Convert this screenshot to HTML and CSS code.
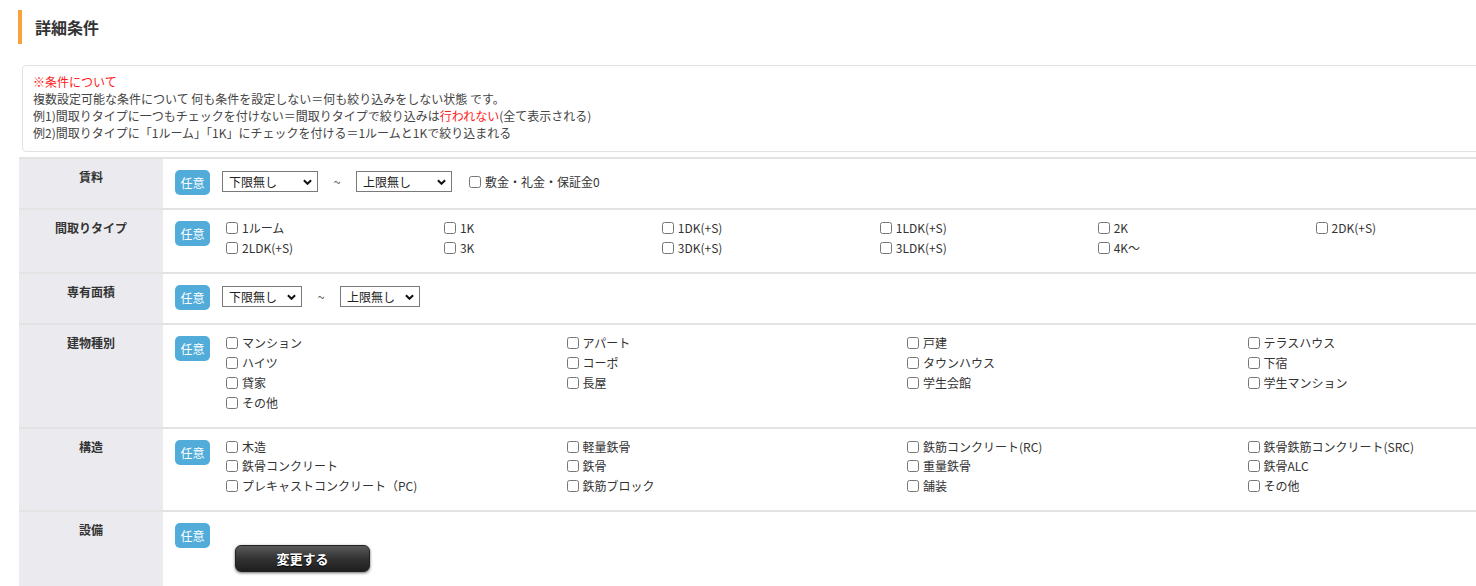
FILE: index.html
```html
<!DOCTYPE html>
<html lang="ja">
<head>
  <meta charset="UTF-8">
  <meta name="viewport" content="width=device-width, initial-scale=1.0">
  <title>詳細条件</title>
  <link rel="stylesheet" href="styles.css">
</head>
<body>
  <div class="wrap">
    <h2 class="ttl">詳細条件</h2>

    <!-- 条件についての説明 -->
    <div class="notice">
      <p class="notice-red">※条件について</p>
      <p>複数設定可能な条件について 何も条件を設定しない＝何も絞り込みをしない状態 です。</p>
      <p>例1)間取りタイプに一つもチェックを付けない＝間取りタイプで絞り込みは<span class="red">行われない</span>(全て表示される)</p>
      <p>例2)間取りタイプに「1ルーム」「1K」にチェックを付ける＝1ルームと1Kで絞り込まれる</p>
    </div>

    <form class="cond-table">
      <!-- 賃料 -->
      <div class="cond-row">
        <div class="cond-th">賃料</div>
        <div class="cond-td">
          <span class="badge">任意</span>
          <div class="range">
            <div class="sel sel-wide">
              <select><option>下限無し</option></select>
              <svg class="chev" viewBox="0 0 10 6"><path d="M1 1 L5 5 L9 1" /></svg>
            </div>
            <span class="tilde">~</span>
            <div class="sel sel-wide">
              <select><option>上限無し</option></select>
              <svg class="chev" viewBox="0 0 10 6"><path d="M1 1 L5 5 L9 1" /></svg>
            </div>
            <label class="chk chk-inline"><input type="checkbox">敷金・礼金・保証金0</label>
          </div>
        </div>
      </div>

      <!-- 間取りタイプ -->
      <div class="cond-row">
        <div class="cond-th">間取りタイプ</div>
        <div class="cond-td">
          <span class="badge">任意</span>
          <ul class="chk-list six">
            <li><label class="chk"><input type="checkbox">1ルーム</label></li>
            <li><label class="chk"><input type="checkbox">1K</label></li>
            <li><label class="chk"><input type="checkbox">1DK(+S)</label></li>
            <li><label class="chk"><input type="checkbox">1LDK(+S)</label></li>
            <li><label class="chk"><input type="checkbox">2K</label></li>
            <li><label class="chk"><input type="checkbox">2DK(+S)</label></li>
            <li><label class="chk"><input type="checkbox">2LDK(+S)</label></li>
            <li><label class="chk"><input type="checkbox">3K</label></li>
            <li><label class="chk"><input type="checkbox">3DK(+S)</label></li>
            <li><label class="chk"><input type="checkbox">3LDK(+S)</label></li>
            <li><label class="chk"><input type="checkbox">4K～</label></li>
          </ul>
        </div>
      </div>

      <!-- 専有面積 -->
      <div class="cond-row">
        <div class="cond-th">専有面積</div>
        <div class="cond-td">
          <span class="badge">任意</span>
          <div class="range">
            <div class="sel">
              <select><option>下限無し</option></select>
              <svg class="chev" viewBox="0 0 10 6"><path d="M1 1 L5 5 L9 1" /></svg>
            </div>
            <span class="tilde">~</span>
            <div class="sel">
              <select><option>上限無し</option></select>
              <svg class="chev" viewBox="0 0 10 6"><path d="M1 1 L5 5 L9 1" /></svg>
            </div>
          </div>
        </div>
      </div>

      <!-- 建物種別 -->
      <div class="cond-row">
        <div class="cond-th">建物種別</div>
        <div class="cond-td">
          <span class="badge">任意</span>
          <ul class="chk-list four">
            <li><label class="chk"><input type="checkbox">マンション</label></li>
            <li><label class="chk"><input type="checkbox">アパート</label></li>
            <li><label class="chk"><input type="checkbox">戸建</label></li>
            <li><label class="chk"><input type="checkbox">テラスハウス</label></li>
            <li><label class="chk"><input type="checkbox">ハイツ</label></li>
            <li><label class="chk"><input type="checkbox">コーポ</label></li>
            <li><label class="chk"><input type="checkbox">タウンハウス</label></li>
            <li><label class="chk"><input type="checkbox">下宿</label></li>
            <li><label class="chk"><input type="checkbox">貸家</label></li>
            <li><label class="chk"><input type="checkbox">長屋</label></li>
            <li><label class="chk"><input type="checkbox">学生会館</label></li>
            <li><label class="chk"><input type="checkbox">学生マンション</label></li>
            <li><label class="chk"><input type="checkbox">その他</label></li>
          </ul>
        </div>
      </div>

      <!-- 構造 -->
      <div class="cond-row">
        <div class="cond-th">構造</div>
        <div class="cond-td">
          <span class="badge">任意</span>
          <ul class="chk-list four tight">
            <li><label class="chk"><input type="checkbox">木造</label></li>
            <li><label class="chk"><input type="checkbox">軽量鉄骨</label></li>
            <li><label class="chk"><input type="checkbox">鉄筋コンクリート(RC)</label></li>
            <li><label class="chk"><input type="checkbox">鉄骨鉄筋コンクリート(SRC)</label></li>
            <li><label class="chk"><input type="checkbox">鉄骨コンクリート</label></li>
            <li><label class="chk"><input type="checkbox">鉄骨</label></li>
            <li><label class="chk"><input type="checkbox">重量鉄骨</label></li>
            <li><label class="chk"><input type="checkbox">鉄骨ALC</label></li>
            <li><label class="chk"><input type="checkbox">プレキャストコンクリート（PC)</label></li>
            <li><label class="chk"><input type="checkbox">鉄筋ブロック</label></li>
            <li><label class="chk"><input type="checkbox">舗装</label></li>
            <li><label class="chk"><input type="checkbox">その他</label></li>
          </ul>
        </div>
      </div>

      <!-- 設備 -->
      <div class="cond-row">
        <div class="cond-th">設備</div>
        <div class="cond-td cond-td-col">
          <span class="badge">任意</span>
          <button type="button" class="btn-change">変更する</button>
        </div>
      </div>
    </form>
  </div>
</body>
</html>
```

FILE: styles.css
```css
html, body {
  overflow-x: hidden;
}

body {
  margin: 0;
  background-color: #ffffff;
  font-family: "Noto Sans CJK JP", "Noto Sans", sans-serif;
  font-size: 12px;
  color: #333;
}

.wrap {
  width: 1620px;
  padding-left: 19px;
  padding-top: 10px;
}

.ttl {
  margin: 0 0 0 -1px;
  height: 34px;
  line-height: 34px;
  padding-left: 13px;
  border-left: 4px solid #f7a23d;
  font-size: 16px;
  font-weight: bold;
  color: #333;
}

.notice {
  margin: 21px 0 0 3px;
  padding: 7px 10px 10px;
  border: 1px solid #e2e2e2;
  border-radius: 4px;
  line-height: 17px;
  color: #444;
}

.notice p {
  margin: 0;
}

.notice-red,
.red {
  color: #ff1a1a;
}

.cond-table {
  margin-top: 5px;
  border-bottom: 2px solid #e3e3e3;
}

.cond-row {
  display: grid;
  grid-template-columns: 144px 1fr;
  border-top: 2px solid #e3e3e3;
}

.cond-th {
  background-color: #ebebef;
  padding-top: 9px;
  line-height: 18px;
  text-align: center;
  font-weight: bold;
  color: #333;
}

.cond-td {
  display: flex;
  align-items: flex-start;
  gap: 12px;
  padding: 8px 0 13px 12px;
  background-color: #fff;
}

.cond-td-col {
  flex-direction: column;
  gap: 0;
  padding-bottom: 14px;
}

.badge {
  flex: none;
  display: inline-block;
  width: 35px;
  height: 25px;
  line-height: 25px;
  margin-top: 3px;
  text-align: center;
  background-color: #52acd9;
  border-radius: 5px;
  color: #fff;
  font-size: 12px;
}

.range {
  display: flex;
  align-items: center;
  margin-top: 4px;
}

.sel {
  position: relative;
  width: 80px;
  height: 21px;
}

.sel-wide {
  width: 96px;
}

.sel select {
  appearance: none;
  -webkit-appearance: none;
  width: 100%;
  height: 21px;
  margin: 0;
  padding: 0 0 0 6px;
  border: 1px solid #7a7a7a;
  border-radius: 0;
  background-color: #fff;
  font-family: inherit;
  font-size: 12px;
  color: #222;
}

.chev {
  position: absolute;
  right: 6px;
  top: 8px;
  width: 9px;
  height: 6px;
  pointer-events: none;
}

.chev path {
  fill: none;
  stroke: #111;
  stroke-width: 2.2;
}

.tilde {
  width: 38px;
  text-align: center;
  font-size: 13px;
  color: #666;
}

.chk {
  display: flex;
  align-items: center;
  height: 100%;
  white-space: nowrap;
  color: #333;
}

.chk input {
  width: 12px;
  height: 12px;
  margin: 0 4px 0 4px;
}

.chk-inline {
  margin-left: 13px;
}

.chk-list {
  display: flex;
  flex-wrap: wrap;
  width: 1362px;
  margin: 0;
  padding: 0 0 1px;
  list-style: none;
  line-height: 20px;
}

.chk-list li {
  height: 20px;
}

.chk-list.six li {
  width: 16%;
}

.chk-list.four li {
  width: 25%;
}

.chk-list.tight li {
  height: 19.5px;
}

.btn-change {
  width: 135px;
  height: 27px;
  margin: -3px 0 0 60px;
  border: 1px solid #222;
  border-radius: 6px;
  background: linear-gradient(#5a5a5a, #333 50%, #1e1e1e);
  box-shadow: 0 1px 3px rgba(0, 0, 0, 0.6);
  color: #fff;
  font-family: inherit;
  font-size: 13px;
  font-weight: bold;
  text-shadow: 0 1px 1px #000;
  cursor: pointer;
}
```
